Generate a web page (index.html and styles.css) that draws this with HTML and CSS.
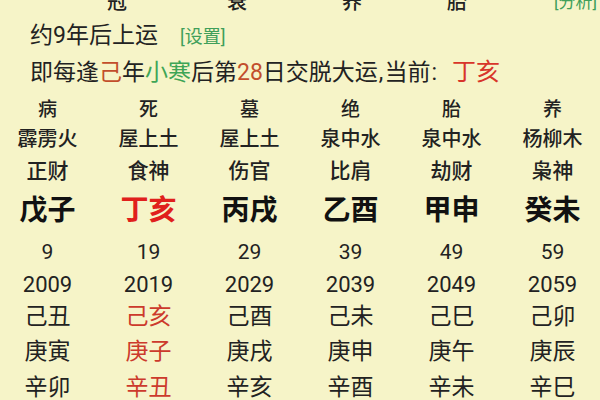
FILE: index.html
```html
<!DOCTYPE html>
<html lang="zh-CN">
<head>
<meta charset="utf-8">
<title>大运</title>
<link rel="stylesheet" href="styles.css">
</head>
<body>
<div class="page">
  <div class="top">
    <span class="tc c1">冠</span>
    <span class="tc c2">衰</span>
    <span class="tc c3">养</span>
    <span class="tc c4">胎</span>
    <span class="tc link">[分析]</span>
  </div>
  <div class="line l1">约9年后上运<span class="link set">[设置]</span></div>
  <div class="line l2">即每逢<span class="brown">己</span>年<span class="green">小寒</span>后第<span class="brown">28</span>日交脱大运<span class="punct">,</span>当前<span class="punct">:</span><span class="red cur-dy">丁亥</span></div>

  <div class="table">
    <div class="row r1"><span>病</span><span>死</span><span>墓</span><span>绝</span><span>胎</span><span>养</span></div>
    <div class="row r2"><span>霹雳火</span><span>屋上土</span><span>屋上土</span><span>泉中水</span><span>泉中水</span><span>杨柳木</span></div>
    <div class="row r3"><span>正财</span><span>食神</span><span>伤官</span><span>比肩</span><span>劫财</span><span>枭神</span></div>
    <div class="row r4"><span>戊子</span><span class="hot">丁亥</span><span>丙戌</span><span>乙酉</span><span>甲申</span><span>癸未</span></div>
    <div class="row r5 num"><span>9</span><span>19</span><span>29</span><span>39</span><span>49</span><span>59</span></div>
    <div class="row r6 num"><span>2009</span><span>2019</span><span>2029</span><span>2039</span><span>2049</span><span>2059</span></div>
    <div class="row r7"><span>己丑</span><span class="cur">己亥</span><span>己酉</span><span>己未</span><span>己巳</span><span>己卯</span></div>
    <div class="row r8"><span>庚寅</span><span class="cur">庚子</span><span>庚戌</span><span>庚申</span><span>庚午</span><span>庚辰</span></div>
    <div class="row r9"><span>辛卯</span><span class="cur">辛丑</span><span>辛亥</span><span>辛酉</span><span>辛未</span><span>辛巳</span></div>
  </div>
</div>
</body>
</html>
```

FILE: styles.css
```css
html, body {
  margin: 0;
  padding: 0;
  background: #f6f4c8;
}
body {
  width: 600px;
  height: 400px;
  overflow: hidden;
  font-family: Roboto, "Noto Sans CJK SC", "Noto Sans", sans-serif;
  color: #222;
}
.page {
  width: 600px;
}
.top {
  display: grid;
  grid-template-columns: 57px 120px 120px 110px 100px 1fr;
  margin-top: -12px;
  height: 28px;
  line-height: 28px;
  font-size: 20px;
  font-weight: 500;
  overflow: hidden;
}
.top .c1 { grid-column: 2; text-align: center; }
.top .c2 { grid-column: 3; text-align: center; }
.top .c3 { grid-column: 4; text-align: center; }
.top .c4 { grid-column: 5; text-align: center; }
.top .link {
  grid-column: 6;
  text-align: right;
  padding-right: 3px;
  font-size: 17px;
  font-weight: normal;
}
.link {
  color: #3f9f5a;
}
.line {
  padding-left: 30px;
  white-space: nowrap;
}
.l1 {
  height: 40px;
  line-height: 40px;
  font-size: 23px;
}
.l1 .set {
  font-size: 18px;
  margin-left: 22px;
}
.l2 {
  height: 32px;
  line-height: 32px;
  font-size: 23px;
}
.l2 .punct {
  margin: 0 1px;
}
.l2 .cur-dy {
  margin-left: 14px;
  font-size: 24px;
}
.brown { color: #c24e2c; }
.green { color: #3ea556; }
.red { color: #d8352a; }

.table {
  margin-top: 8px;
  margin-left: -3px;
}
.row {
  display: grid;
  grid-template-columns: repeat(6, 101px);
  text-align: center;
  white-space: nowrap;
}
.r1 { height: 28px; line-height: 28px; font-size: 19px; font-weight: 500; }
.r2 { height: 30px; line-height: 30px; font-size: 20px; font-weight: 500; }
.r3 { height: 34px; line-height: 34px; font-size: 21px; font-weight: 500; }
.r4 { height: 46px; line-height: 46px; font-size: 28px; font-weight: bold; color: #111; }
.r4 .hot { color: #e0201c; }
.r5 { height: 36px; line-height: 36px; font-size: 21px; }
.r6 { height: 30px; line-height: 30px; font-size: 22px; }
.r7 { height: 34px; line-height: 34px; font-size: 23px; }
.r8 { height: 36px; line-height: 36px; font-size: 23px; }
.r9 { height: 36px; line-height: 36px; font-size: 23px; }
.cur { color: #cc3a2c; }
```
